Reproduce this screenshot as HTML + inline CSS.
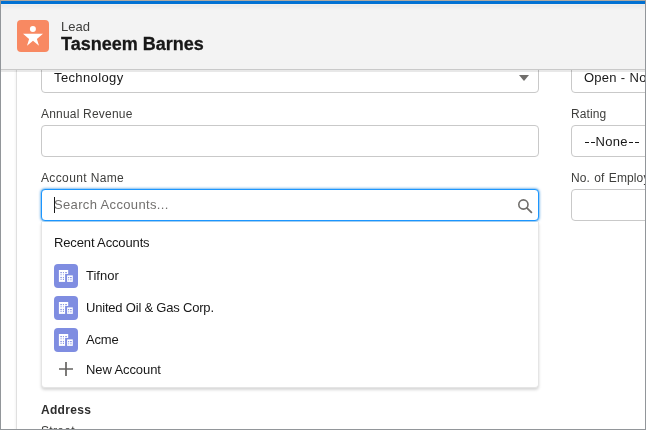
<!DOCTYPE html>
<html><head><meta charset="utf-8">
<style>
html,body{margin:0;padding:0;}
body{width:646px;height:430px;overflow:hidden;position:relative;background:#fff;font-family:"Liberation Sans",sans-serif;color:#181818;}
#root{position:absolute;left:0;top:0;width:646px;height:430px;background:#fff;will-change:transform;overflow:hidden;}
.abs{position:absolute;}
#frame{position:absolute;left:0;top:0;width:644px;height:428px;border:1px solid #92969a;border-top-color:#aca79f;pointer-events:none;z-index:50;}
#blue{left:1px;top:1px;width:644px;height:3px;background:#0070d2;z-index:40;}
#cream{left:1px;top:4px;width:644px;height:1px;background:#f6f0ea;z-index:40;}
#header{left:1px;top:4px;width:644px;height:65px;background:linear-gradient(to bottom,#f3f3f3 0px,#e9e9e9 1px,#f3f3f3 6px);border-bottom:1px solid #c9c9c9;z-index:30;box-shadow:0 2px 0 rgba(0,0,0,0.09);}
#vline{left:16px;top:70px;width:1px;height:360px;background:#e0e0e0;box-shadow:-1px 0 2px rgba(0,0,0,0.06);}
.icon{width:32px;height:32px;border-radius:4px;background:#f88962;}
.lbl{font-size:12px;color:#3e3e3c;line-height:18px;white-space:nowrap;}
.val{font-size:13px;color:#181818;line-height:18px;white-space:nowrap;}
.box{border:1px solid #c9c9c9;border-radius:4px;background:#fff;box-sizing:border-box;height:32px;}
.hy{top:141.7px;width:4.4px;height:1.4px;background:#181818;}
.acc{width:24px;height:24px;border-radius:4px;background:#7f8de1;}
</style></head><body><div id="root">
<div id="frame"></div>
<div class="abs" id="blue"></div>
<div class="abs" id="header">
  <div class="abs icon" style="left:16px;top:16px;">
    <svg width="32" height="32" viewBox="0 0 32 32"><circle cx="15.9" cy="9" r="3" fill="#fff"/><path d="M6 13.7 L26 13.7 L19.9 18.9 L22 25.7 L16 20.7 L10 25.7 L12.1 18.9 Z" fill="#fff"/></svg>
  </div>
  <div class="abs" style="left:60px;top:14px;font-size:13px;color:#3e3e3c;line-height:18px;">Lead</div>
  <div class="abs" style="left:60px;top:28px;font-size:18px;font-weight:bold;color:#181818;line-height:24px;-webkit-text-stroke:0.3px #181818;">Tasneem Barnes</div>
</div>
<div class="abs" id="vline"></div>

<!-- left column -->
<div class="abs box" style="left:41px;top:61px;width:498px;"></div>
<div class="abs val" style="left:54px;top:69px;letter-spacing:0.38px;">Technology</div>
<svg class="abs" style="left:518px;top:74px" width="12" height="8"><path d="M1 1 L11 1 L6 7 Z" fill="#706e6b"/></svg>

<div class="abs lbl" style="left:41px;top:105px;letter-spacing:0.2px;">Annual Revenue</div>
<div class="abs box" style="left:41px;top:125px;width:498px;"></div>

<div class="abs lbl" style="left:41px;top:169px;letter-spacing:0.37px;">Account Name</div>
<div class="abs box" style="left:41px;top:189px;width:498px;border-color:#1b96ff;box-shadow:0 0 3px #0176d3;"></div>
<div class="abs" style="left:54px;top:197px;width:1px;height:16px;background:#181818;"></div>
<div class="abs val" style="left:54px;top:196.3px;color:#72706e;letter-spacing:0.35px;">Search Accounts...</div>
<svg class="abs" style="left:515px;top:196px" width="18" height="18" viewBox="0 0 18 18"><circle cx="8.4" cy="8.5" r="4.6" fill="none" stroke="#706e6b" stroke-width="1.6"/><path d="M11.8 11.9 L16.4 16.4" stroke="#706e6b" stroke-width="1.8" stroke-linecap="round"/></svg>

<!-- dropdown -->
<div class="abs" style="left:41px;top:222px;width:498px;height:166px;box-sizing:border-box;border:1px solid #e5e5e5;border-top:none;border-radius:0 0 4px 4px;background:#fff;box-shadow:0 2px 3px 0 rgba(0,0,0,0.16);"></div>
<div class="abs val" style="left:54px;top:234px;letter-spacing:-0.14px;">Recent Accounts</div>

<svg width="0" height="0" style="position:absolute"><defs>
<g id="bld">
<rect width="24" height="24" rx="4" fill="#7f8de1"/>
<rect x="4.9" y="6" width="9.3" height="11.9" fill="#fff"/>
<rect x="11.1" y="10" width="10" height="10" fill="#7f8de1"/>
<rect x="13.1" y="11.4" width="5.7" height="6.5" fill="#fff"/>
<g fill="#8e9ae4">
<rect x="6.3" y="8" width="1.6" height="1.2"/><rect x="8.9" y="8" width="1.1" height="1.2"/><rect x="11.2" y="8" width="1.7" height="1.2"/>
<rect x="6.3" y="12.9" width="1.6" height="1.2"/><rect x="8.9" y="12.9" width="1.1" height="1.2"/>
<rect x="8.9" y="14.8" width="1.1" height="1.2"/>
<rect x="14" y="13" width="1.1" height="1.2"/><rect x="15.9" y="13" width="1.9" height="1.2"/>
</g>
<g fill="#b3bbef">
<rect x="6.3" y="10.2" width="1.6" height="1.1"/><rect x="8.9" y="10.2" width="1.1" height="1.1"/>
<rect x="6.3" y="14.8" width="1.6" height="1.2"/>
<rect x="14" y="15.2" width="1.1" height="1.2"/><rect x="15.9" y="15.2" width="1.9" height="1.2"/>
</g>
</g></defs></svg>

<svg class="abs" style="left:54px;top:264px" width="24" height="24"><use href="#bld"/></svg>
<div class="abs val" style="left:86px;top:267px;">Tifnor</div>
<svg class="abs" style="left:54px;top:296px" width="24" height="24"><use href="#bld"/></svg>
<div class="abs val" style="left:86px;top:299px;letter-spacing:-0.2px;">United Oil &amp; Gas Corp.</div>
<svg class="abs" style="left:54px;top:328px" width="24" height="24"><use href="#bld"/></svg>
<div class="abs val" style="left:86px;top:331px;letter-spacing:-0.2px;">Acme</div>
<svg class="abs" style="left:58px;top:361px" width="16" height="16"><path d="M8 1 V15 M1 8 H15" stroke="#666462" stroke-width="1.7"/></svg>
<div class="abs val" style="left:86px;top:360.5px;letter-spacing:-0.1px;">New Account</div>

<div class="abs" style="left:41px;top:401px;font-size:12px;font-weight:bold;color:#2e2e2e;line-height:18px;letter-spacing:0.3px;">Address</div>
<div class="abs lbl" style="left:41px;top:421.5px;letter-spacing:0.3px;">Street</div>

<!-- right column -->
<div class="abs box" style="left:571px;top:61px;width:200px;"></div>
<div class="abs val" style="left:584px;top:69px;letter-spacing:0.25px;word-spacing:0.2px;">Open - Not Contacted</div>
<div class="abs lbl" style="left:571px;top:105px;letter-spacing:0.1px;">Rating</div>
<div class="abs box" style="left:571px;top:125px;width:200px;"></div>
<div class="abs val" style="left:595.6px;top:133px;letter-spacing:0.3px;">None</div>
<div class="abs hy" style="left:584.6px"></div><div class="abs hy" style="left:590.6px"></div><div class="abs hy" style="left:629.1px"></div><div class="abs hy" style="left:635px"></div>
<div class="abs lbl" style="left:571px;top:169px;letter-spacing:0.12px;word-spacing:0.8px;">No. of Employees</div>
<div class="abs box" style="left:571px;top:189px;width:200px;"></div>
</div></body></html>
